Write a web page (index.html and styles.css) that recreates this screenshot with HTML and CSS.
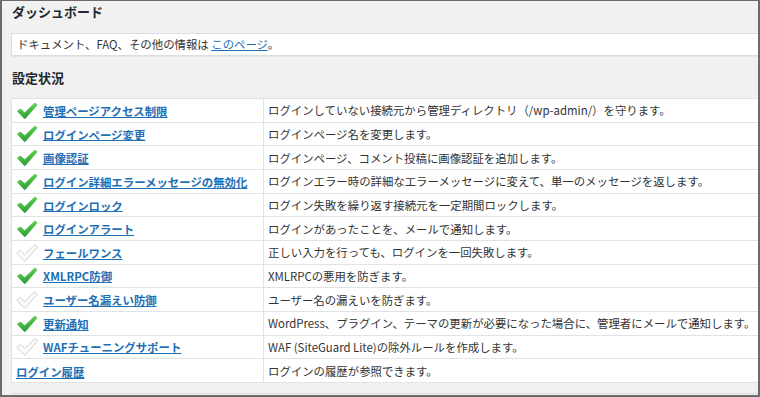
FILE: index.html
```html
<!DOCTYPE html>
<html lang="ja">
<head>
    <meta charset="UTF-8">
    <meta name="viewport" content="width=device-width, initial-scale=1.0">
    <title>ダッシュボード</title>
    <link rel="stylesheet" href="styles.css">
</head>
<body>
    <svg class="defs" width="0" height="0">
        <defs>
            <linearGradient id="green" x1="0" y1="0" x2="0.3" y2="1">
                <stop offset="0" stop-color="#9be08a"/>
                <stop offset="0.5" stop-color="#4cbf46"/>
                <stop offset="1" stop-color="#2f9a34"/>
            </linearGradient>
            <symbol id="check" viewBox="0 0 22 18">
                <path d="M1.2 9.6 Q1 8.8 1.8 8.2 L3.9 6.9 Q4.6 6.5 5.2 7.1 L8.6 10.6 L18.3 1.1 Q18.9 0.5 19.6 1 L21 2.3 Q21.6 2.9 21 3.6 L9.6 16.6 Q8.8 17.4 8 16.6 Z"/>
            </symbol>
        </defs>
    </svg>

    <div class="wrap">
        <h1>ダッシュボード</h1>

        <div class="notice">
            ドキュメント、FAQ、その他の情報は <a href="#">このページ</a>。
        </div>

        <h2>設定状況</h2>

        <table class="status">
            <tr>
                <td class="name"><svg class="icon on"><use href="#check"/></svg><a href="#">管理ページアクセス制限</a></td>
                <td>ログインしていない接続元から管理ディレクトリ（/wp-admin/）を守ります。</td>
            </tr>
            <tr>
                <td class="name"><svg class="icon on"><use href="#check"/></svg><a href="#">ログインページ変更</a></td>
                <td>ログインページ名を変更します。</td>
            </tr>
            <tr>
                <td class="name"><svg class="icon on"><use href="#check"/></svg><a href="#">画像認証</a></td>
                <td>ログインページ、コメント投稿に画像認証を追加します。</td>
            </tr>
            <tr>
                <td class="name"><svg class="icon on"><use href="#check"/></svg><a href="#">ログイン詳細エラーメッセージの無効化</a></td>
                <td>ログインエラー時の詳細なエラーメッセージに変えて、単一のメッセージを返します。</td>
            </tr>
            <tr>
                <td class="name"><svg class="icon on"><use href="#check"/></svg><a href="#">ログインロック</a></td>
                <td>ログイン失敗を繰り返す接続元を一定期間ロックします。</td>
            </tr>
            <tr>
                <td class="name"><svg class="icon on"><use href="#check"/></svg><a href="#">ログインアラート</a></td>
                <td>ログインがあったことを、メールで通知します。</td>
            </tr>
            <tr>
                <td class="name"><svg class="icon off"><use href="#check"/></svg><a href="#">フェールワンス</a></td>
                <td>正しい入力を行っても、ログインを一回失敗します。</td>
            </tr>
            <tr>
                <td class="name"><svg class="icon on"><use href="#check"/></svg><a href="#">XMLRPC防御</a></td>
                <td>XMLRPCの悪用を防ぎます。</td>
            </tr>
            <tr>
                <td class="name"><svg class="icon off"><use href="#check"/></svg><a href="#">ユーザー名漏えい防御</a></td>
                <td>ユーザー名の漏えいを防ぎます。</td>
            </tr>
            <tr>
                <td class="name"><svg class="icon on"><use href="#check"/></svg><a href="#">更新通知</a></td>
                <td>WordPress、プラグイン、テーマの更新が必要になった場合に、管理者にメールで通知します。</td>
            </tr>
            <tr>
                <td class="name"><svg class="icon off"><use href="#check"/></svg><a href="#">WAFチューニングサポート</a></td>
                <td>WAF (SiteGuard Lite)の除外ルールを作成します。</td>
            </tr>
            <tr>
                <td class="name"><a href="#">ログイン履歴</a></td>
                <td>ログインの履歴が参照できます。</td>
            </tr>
        </table>

        <div class="foot"></div>
    </div>
</body>
</html>
```

FILE: styles.css
```css
html {
    background: #f1f1f1;
}
body {
    margin: 0;
    height: 397px;
    box-sizing: border-box;
    border: 2px solid #6b6b6b;
    border-top-width: 1px;
    background: #f1f1f1;
    overflow: hidden;
    font-family: "Noto Sans CJK JP", sans-serif;
    font-size: 11.4px;
    color: #333;
}
.defs {
    position: absolute;
}
.wrap {
    padding-left: 9px;
    margin-right: -30px;
}
h1 {
    margin: 3px 0 0 1px;
    font-size: 13px;
    line-height: 16px;
    font-weight: 600;
    color: #23282d;
}
.notice {
    margin-top: 13px;
    height: 23px;
    box-sizing: border-box;
    padding-left: 5px;
    line-height: 21px;
    background: #fff;
    border: 1px solid #ddd;
    border-radius: 2px;
    box-shadow: 0 1px 1px rgba(0, 0, 0, 0.06);
}
a {
    color: #1e6fb5;
    text-decoration: underline;
}
h2 {
    margin: 14px 0 0 1px;
    font-size: 13px;
    line-height: 16px;
    font-weight: 600;
    color: #23282d;
}
.status {
    margin-top: 12px;
    width: 100%;
    border-collapse: collapse;
    background: #fff;
    border: 1px solid #d6d6d6;
}
.status td {
    height: 23.67px;
    box-sizing: border-box;
    padding: 0 0 0 4px;
    border: 1px solid #e2e2e2;
    white-space: nowrap;
    vertical-align: middle;
}
.status td.name {
    width: 252px;
}
.name a {
    font-weight: 600;
    vertical-align: middle;
}
.icon {
    width: 22px;
    height: 18px;
    margin-right: 5px;
    vertical-align: middle;
}
.icon.on {
    fill: url(#green);
}
.icon.off {
    fill: #fbfbfb;
    stroke: #c9c9c9;
    stroke-width: 0.9;
}
.foot {
    height: 10px;
    border-bottom: 1px solid #dcdcdc;
}
```
